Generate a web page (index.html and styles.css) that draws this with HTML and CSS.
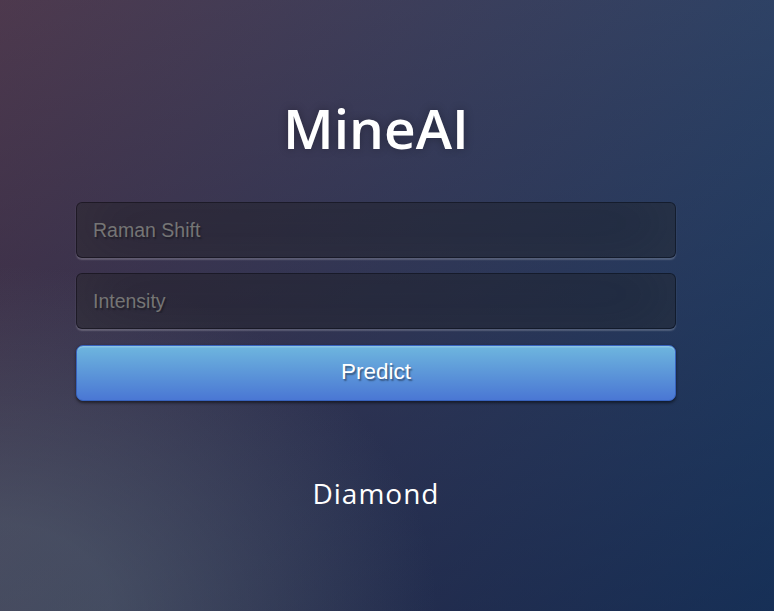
FILE: index.html
```html
<!DOCTYPE html>
<html lang="en">
<head>
<meta charset="utf-8">
<title>MineAI</title>
<link rel="stylesheet" href="styles.css">
</head>
<body>
<div class="login">
  <h1 class="title">MineAI</h1>
  <form class="form">
    <input class="field" type="text" placeholder="Raman Shift">
    <input class="field" type="text" placeholder="Intensity">
    <button class="btn" type="button">Predict</button>
  </form>
  <p class="result">Diamond</p>
</div>
</body>
</html>
```

FILE: styles.css
```css
html, body {
  margin: 0;
  width: 100%;
  height: 100%;
  overflow: hidden;
}
body {
  font-family: "Open Sans", "Noto Sans", sans-serif;
  background-color: #092756;
  background-image:
    radial-gradient(ellipse farthest-corner at 0% 100%, rgba(104,128,138,.4) 10%, rgba(138,114,76,0) 40%),
    linear-gradient(to bottom, rgba(57,173,219,.25) 0%, rgba(42,60,87,.4) 100%),
    linear-gradient(135deg, #670d10 -25%, #092756 100%);
}
.login {
  width: 600px;
  margin-left: 76px;
  padding-top: 90px;
}
.title {
  margin: 0 0 36px;
  font-size: 55px;
  line-height: 76px;
  font-weight: 600;
  color: #fff;
  text-align: center;
  text-shadow: 0 0 10px rgba(0,0,0,0.3);
}
.form {
  display: flex;
  flex-direction: column;
  gap: 15px;
  margin: 0;
}
.field {
  box-sizing: border-box;
  width: 100%;
  height: 56px;
  margin: 0;
  padding: 0 16px;
  font-family: "Liberation Sans", Arial, sans-serif;
  font-size: 19.5px;
  color: #fff;
  background: rgba(0,0,0,0.3);
  border: 1.5px solid rgba(0,0,0,0.3);
  border-radius: 6px;
  outline: none;
  text-shadow: 1.5px 1.5px 1.5px rgba(0,0,0,0.3);
  box-shadow: inset 0 -7px 67px rgba(100,100,100,0.2), 0 1.5px 1.5px rgba(255,255,255,0.2);
}
.field::placeholder {
  color: #757575;
}
.btn {
  box-sizing: border-box;
  width: 100%;
  height: 56px;
  margin-top: 1px;
  padding: 0 0 2px;
  font-family: "Liberation Sans", Arial, sans-serif;
  font-size: 22.5px;
  color: #fff;
  background-color: #4a77d4;
  background-image: linear-gradient(to bottom, #6eb6de, #4a77d4);
  border: 1.5px solid #3762bc;
  border-radius: 7px;
  text-shadow: 1.5px 1.5px 1.5px rgba(0,0,0,0.4);
  box-shadow: inset 0 1.5px 0 rgba(255,255,255,0.2), 0 1.5px 3px rgba(0,0,0,0.5);
  cursor: pointer;
}
.result {
  margin: 73px 0 0;
  font-size: 28px;
  line-height: 38px;
  letter-spacing: 1px;
  color: #fff;
  text-align: center;
}
```
